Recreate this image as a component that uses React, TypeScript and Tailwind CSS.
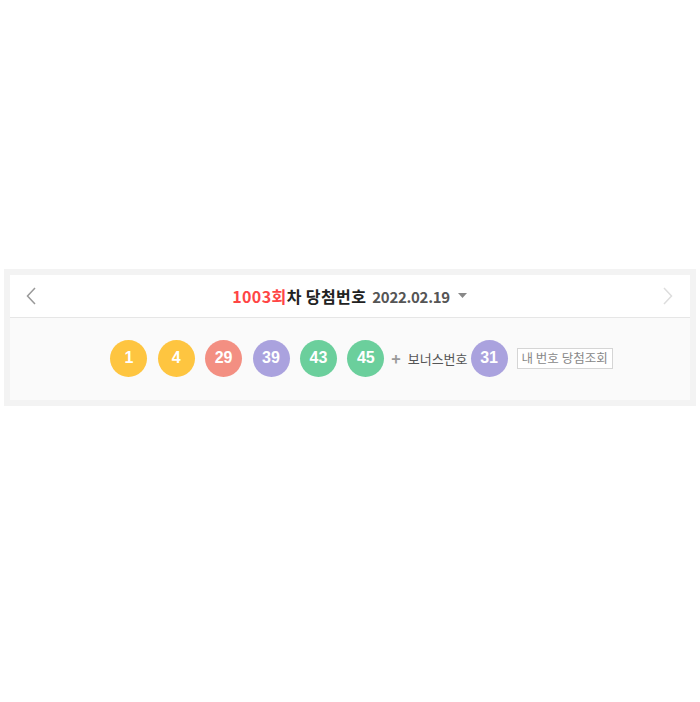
import React from "react";

const balls: { n: number; c: string }[] = [
  { n: 1, c: "bg-[#fec540]" },
  { n: 4, c: "bg-[#fec540]" },
  { n: 29, c: "bg-[#f38f82]" },
  { n: 39, c: "bg-[#aaa2de]" },
  { n: 43, c: "bg-[#6bcf9c]" },
  { n: 45, c: "bg-[#6bcf9c]" },
];

function Ball({ n, c }: { n: number; c: string }) {
  return (
    <span
      className={`flex h-[37px] w-[37px] shrink-0 items-center justify-center rounded-full ${c} text-[16px] font-bold text-white`}
      style={{ fontFamily: '"Liberation Sans", Arial, sans-serif' }}
    >
      {n}
    </span>
  );
}

export default function App() {
  return (
    <div
      className="min-h-[702px] w-full bg-white pt-[269px]"
      style={{ fontFamily: '"Noto Sans CJK KR", "Noto Sans", sans-serif' }}
    >
      <div className="mx-[4px] bg-[#f3f3f3] p-[6px]">
        <div className="flex h-[43px] items-center justify-between border-b border-[#e6e6e6] bg-white pl-[15px] pr-[16px]">
          <svg width="12" height="18" viewBox="0 0 12 18">
            <path d="M10 1 L2.5 9 L10 17" fill="none" stroke="#999" strokeWidth="1.5" />
          </svg>
          <div className="flex items-center text-[16px] font-bold leading-none">
            <span className="tracking-[0.4px] text-[#ff4545]">1003회</span>
            <span className="tracking-[0.4px] text-[#222]">차 당첨번호</span>
            <span className="ml-[6px] text-[15px] tracking-[-0.3px] text-[#555]">2022.02.19</span>
            <svg width="9" height="6" viewBox="0 0 9 6" className="ml-[8px]">
              <path d="M0 0 L9 0 L4.5 5 Z" fill="#888" />
            </svg>
          </div>
          <svg width="12" height="18" viewBox="0 0 12 18">
            <path d="M2 1 L9.5 9 L2 17" fill="none" stroke="#ddd" strokeWidth="1.5" />
          </svg>
        </div>
        <div className="flex h-[82px] items-center justify-center bg-[#fafafa] pb-[2px] pl-[23px]">
          <div className="flex items-center gap-[10.4px]">
            {balls.map((b) => (
              <Ball key={b.n} n={b.n} c={b.c} />
            ))}
          </div>
          <span className="ml-[7px] text-[16px] font-bold leading-none text-[#999]">+</span>
          <span className="ml-[7px] text-[13px] leading-none text-[#555]">보너스번호</span>
          <span className="ml-[3px]">
            <Ball n={31} c="bg-[#aaa2de]" />
          </span>
          <span className="ml-[9px] flex h-[21px] items-center border border-[#d5d5d5] bg-white px-[4px] text-[12.5px] leading-none text-[#888]">
            내 번호 당첨조회
          </span>
        </div>
      </div>
    </div>
  );
}
